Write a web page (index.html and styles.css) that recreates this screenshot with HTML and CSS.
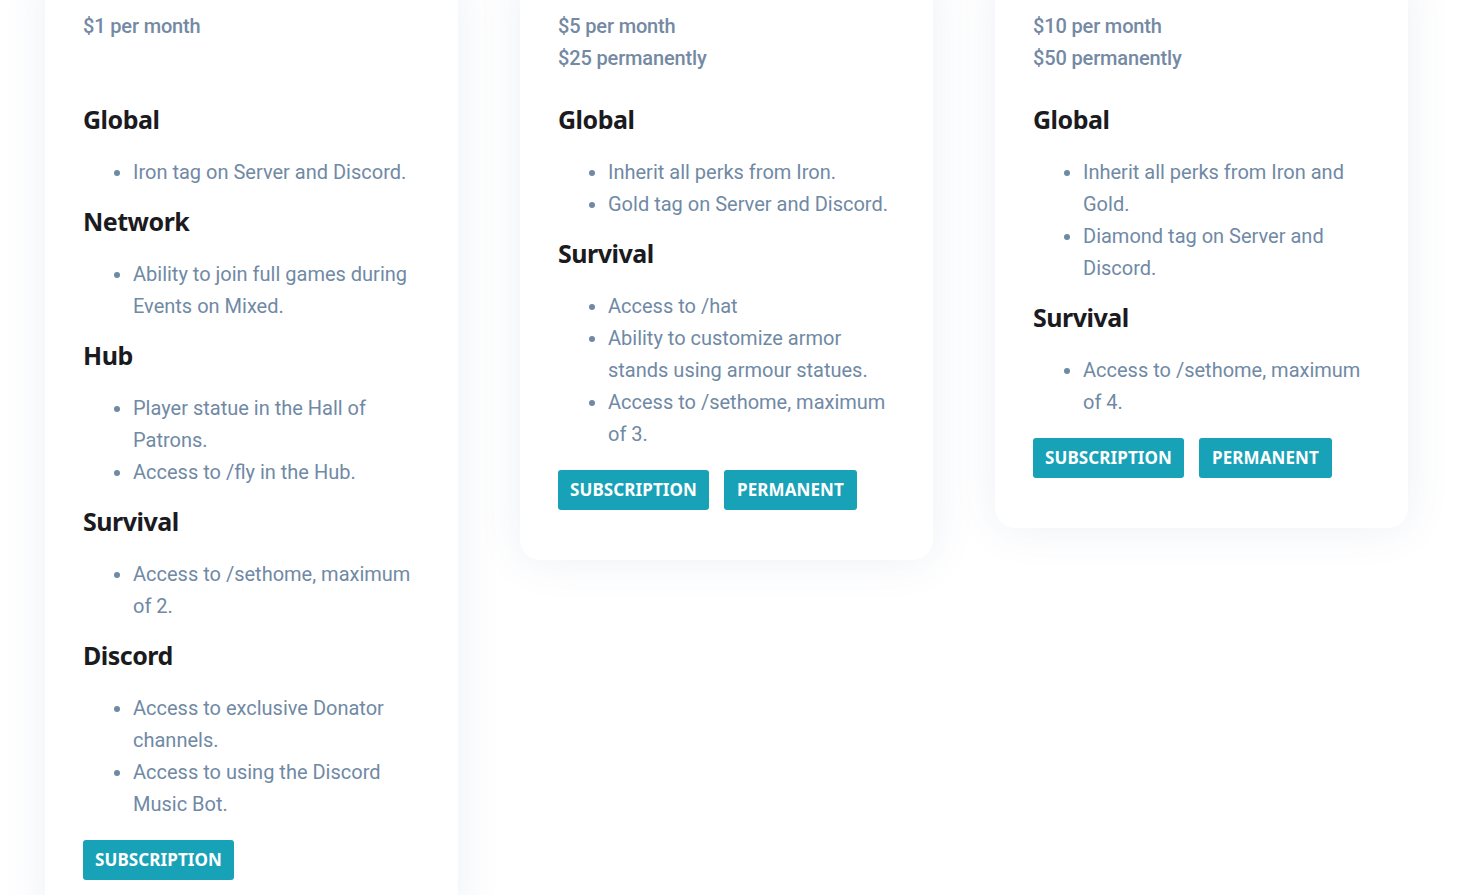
FILE: index.html
```html
<!DOCTYPE html>
<html>
<head>
<meta charset="utf-8">
<link rel="stylesheet" href="styles.css">
</head>
<body>
<div class="tiers">
  <div class="card">
    <div class="price">
      <div>$1 per month</div>
    </div>
    <div class="section">
      <h3>Global</h3>
      <ul><li>Iron tag on Server and Discord.</li></ul>
    </div>
    <div class="section">
      <h3>Network</h3>
      <ul><li>Ability to join full games during Events on Mixed.</li></ul>
    </div>
    <div class="section">
      <h3>Hub</h3>
      <ul><li>Player statue in the Hall of Patrons.</li><li>Access to /fly in the Hub.</li></ul>
    </div>
    <div class="section">
      <h3>Survival</h3>
      <ul><li>Access to /sethome, maximum of 2.</li></ul>
    </div>
    <div class="section">
      <h3>Discord</h3>
      <ul><li>Access to exclusive Donator channels.</li><li>Access to using the Discord Music Bot.</li></ul>
    </div>
    <div class="buttons">
      <a class="btn">SUBSCRIPTION</a>
    </div>
  </div>

  <div class="card">
    <div class="price">
      <div>$5 per month</div>
      <div>$25 permanently</div>
    </div>
    <div class="section">
      <h3>Global</h3>
      <ul><li>Inherit all perks from Iron.</li><li>Gold tag on Server and Discord.</li></ul>
    </div>
    <div class="section">
      <h3>Survival</h3>
      <ul><li>Access to /hat</li><li>Ability to customize armor stands using armour statues.</li><li>Access to /sethome, maximum of 3.</li></ul>
    </div>
    <div class="buttons">
      <a class="btn">SUBSCRIPTION</a>
      <a class="btn">PERMANENT</a>
    </div>
  </div>

  <div class="card">
    <div class="price">
      <div>$10 per month</div>
      <div>$50 permanently</div>
    </div>
    <div class="section">
      <h3>Global</h3>
      <ul><li>Inherit all perks from Iron and Gold.</li><li>Diamond tag on Server and Discord.</li></ul>
    </div>
    <div class="section">
      <h3>Survival</h3>
      <ul><li>Access to /sethome, maximum of 4.</li></ul>
    </div>
    <div class="buttons">
      <a class="btn">SUBSCRIPTION</a>
      <a class="btn">PERMANENT</a>
    </div>
  </div>
</div>
</body>
</html>
```

FILE: styles.css
```css
html, body {
  margin: 0;
  padding: 0;
  background: #ffffff;
}
body {
  font-family: Roboto, "Liberation Sans", sans-serif;
  color: #7089a5;
}
.tiers {
  display: flex;
  align-items: flex-start;
  gap: 62px;
  padding-left: 45px;
  margin-top: -28px;
}
.card {
  width: 413px;
  box-sizing: border-box;
  flex: none;
  background: #ffffff;
  border-radius: 20px;
  padding: 38px 38px 50px 38px;
  box-shadow: 0 0 45px rgba(70, 85, 150, 0.09);
}
.price {
  height: 64px;
  font-size: 20px;
  line-height: 32px;
  font-weight: 500;
  letter-spacing: -0.15px;
  color: #7489a3;
  margin-bottom: 30px;
}
.section h3 {
  margin: 0;
  font-family: "Noto Sans", sans-serif;
  font-weight: 700;
  font-size: 25px;
  line-height: 30px;
  letter-spacing: -0.5px;
  color: #1b1b1f;
}
.section ul {
  margin: 22px 0 18px 0;
  padding-left: 50px;
  font-size: 20px;
  line-height: 32px;
}
.section li::marker {
  color: #7089a5;
}
.buttons {
  display: flex;
  gap: 15px;
  margin-top: 20px;
}
.btn {
  display: inline-block;
  background: #18a2b8;
  color: #ffffff;
  font-family: "Noto Sans", sans-serif;
  font-weight: 700;
  font-size: 17px;
  line-height: 40px;
  height: 40px;
  padding: 0 12px;
  border-radius: 3px;
  letter-spacing: 0.1px;
}
.btn + .btn {
  padding: 0 13px;
}
```
